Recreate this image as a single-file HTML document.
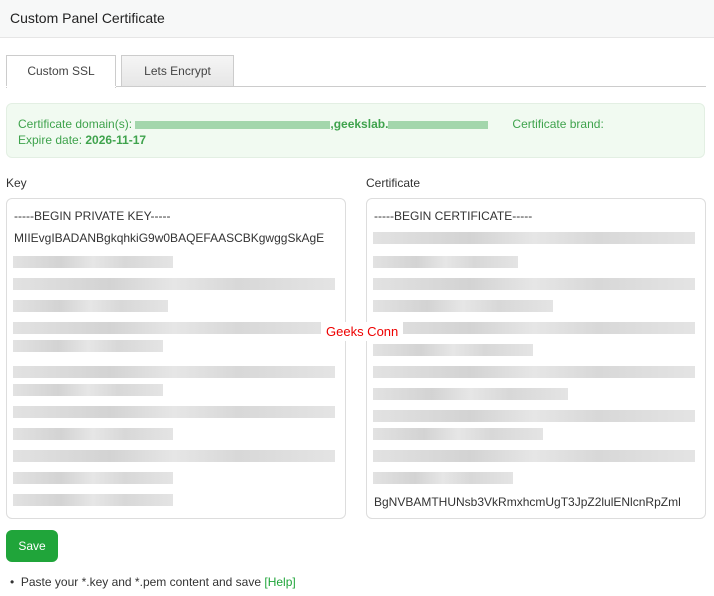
<!DOCTYPE html>
<html><head><style>
*{box-sizing:border-box;margin:0;padding:0}
body{width:714px;height:596px;background:#fff;font-family:"Liberation Sans",sans-serif;font-size:12px;color:#333;position:relative;overflow:hidden}
.hdr{position:absolute;left:0;top:0;width:714px;height:38px;background:#f7f8f8;border-bottom:1px solid #e6e6e6;font-size:14px;color:#222;padding:10px 10px}
.tab{position:absolute;top:55px;height:32px;border:1px solid #ccc;border-bottom:none;font-size:12px;text-align:center;line-height:31px;color:#444}
.line{position:absolute;left:6px;top:86px;width:700px;height:1px;background:#ccc}
.info{position:absolute;left:6px;top:103px;width:699px;height:55px;background:#f1faf1;border:1px solid #e3efe3;border-radius:6px;color:#3fa34d;padding:12px 11px;line-height:16px}
.lbl{position:absolute;top:176px;font-size:12px;color:#333}
.ta{position:absolute;top:198px;width:340px;height:321px;border:1px solid #ddd;border-radius:6px;padding:6px 7px;font-size:12px;color:#333;line-height:22px}
.b{position:absolute;height:12px;background:linear-gradient(90deg,#e2e2e2,#d3d3d3 30%,#e6e6e6 50%,#d8d8d8 70%,#e4e4e4)}
.btn{position:absolute;left:6px;top:530px;width:52px;height:32px;background:#20a53a;border-radius:6px;color:#fff;font-size:12px;text-align:center;line-height:32px}
.note{position:absolute;left:10px;top:575px;font-size:12px;color:#333}
</style></head><body>
<div class="hdr">Custom Panel Certificate</div>
<div class="tab" style="left:6px;width:110px;background:#fff;height:33px">Custom SSL</div>
<div class="tab" style="left:121px;width:113px;background:linear-gradient(#f5f5f5,#e6e6e6)">Lets Encrypt</div>
<div class="line"></div>
<div class="line" style="left:6px;width:110px;background:#fff"></div>
<div class="info">
<div>Certificate domain(s): <span style="display:inline-block;width:195px;height:8px;background:#a3d6ac;vertical-align:middle"></span><b>,geekslab.</b><span style="display:inline-block;width:100px;height:8px;background:#a3d6ac;vertical-align:middle"></span><span style="margin-left:24px">Certificate brand:</span></div>
<div>Expire date: <b>2026-11-17</b></div>
</div>
<div class="lbl" style="left:6px">Key</div>
<div class="lbl" style="left:366px">Certificate</div>
<div class="ta" style="left:6px">-----BEGIN PRIVATE KEY-----<br>MIIEvgIBADANBgkqhkiG9w0BAQEFAASCBKgwggSkAgE</div>
<div class="ta" style="left:366px">-----BEGIN CERTIFICATE-----
<div style="position:absolute;left:7px;top:292px">BgNVBAMTHUNsb3VkRmxhcmUgT3JpZ2lulENlcnRpZml</div></div>
<div id="bars"></div>
<div style="position:absolute;left:321px;top:322px;background:#fff;color:#e00;font-size:13px;padding:2px 5px">Geeks Conn</div>
<div class="btn">Save</div>
<div class="note">•&nbsp; Paste your *.key and *.pem content and save <span style="color:#20a53a">[Help]</span></div>
<script>
var h='',L=[[256,160],[278,322],[300,155],[322,322],[340,150],[366,322],[384,150],[406,322],[428,160],[450,322],[472,160],[494,160]],
R=[[232,322],[256,145],[278,322],[300,180],[322,322],[344,160],[366,322],[388,195],[410,322],[428,170],[450,322],[472,140]];
L.forEach(function(a){h+='<div class="b" style="left:13px;top:'+a[0]+'px;width:'+a[1]+'px"></div>'});
R.forEach(function(a){h+='<div class="b" style="left:373px;top:'+a[0]+'px;width:'+a[1]+'px"></div>'});
document.getElementById('bars').innerHTML=h;
</script>
</body></html>
